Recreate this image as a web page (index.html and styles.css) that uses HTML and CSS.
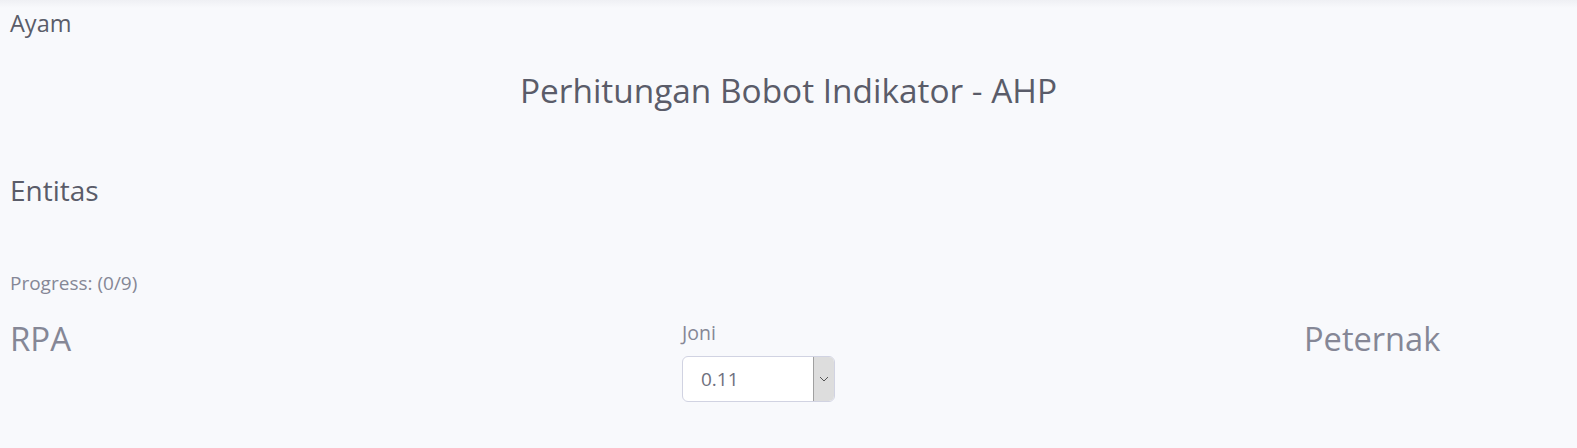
FILE: index.html
```html
<!DOCTYPE html>
<html>
<head>
<meta charset="utf-8">
<link rel="stylesheet" href="styles.css">
</head>
<body>
<div class="topshade"></div>
<div class="page">
  <div class="brand">Ayam</div>
  <h1 class="title">Perhitungan Bobot Indikator - AHP</h1>
  <h2 class="section">Entitas</h2>
  <div class="progress">Progress: (0/9)</div>
  <div class="compare">
    <div class="side">RPA</div>
    <div class="mid">
      <div class="label">Joni</div>
      <div class="select">
        <span class="value">0.11</span>
        <span class="arrow">
          <svg width="10" height="6" viewBox="0 0 10 6"><path d="M1 1 L5 5 L9 1" fill="none" stroke="#555" stroke-width="1"/></svg>
        </span>
      </div>
    </div>
    <div class="side">Peternak</div>
  </div>
</div>
</body>
</html>
```
FILE: styles.css
```css
html, body {
  margin: 0;
  padding: 0;
  background: #f8f9fc;
  height: 100%;
}
body {
  font-family: "Open Sans", "Noto Sans", sans-serif;
  color: #858796;
  position: relative;
}
.topshade {
  position: absolute;
  left: 0;
  right: 0;
  top: 0;
  height: 8px;
  background: linear-gradient(#eff0f4, #f8f9fc);
}
.page {
  position: relative;
  padding: 11px 10px 0 10px;
}
.brand {
  font-size: 23.5px;
  line-height: 24px;
  color: #5a5c69;
}
.title {
  margin: 35px 0 0 0;
  font-size: 33.4px;
  font-weight: 400;
  line-height: 40px;
  color: #5a5c69;
  text-align: center;
}
.section {
  margin: 63px 0 0 0;
  font-size: 28px;
  font-weight: 400;
  line-height: 34px;
  color: #5a5c69;
}
.progress {
  margin-top: 64px;
  font-size: 19px;
  line-height: 24px;
  color: #858796;
}
.compare {
  margin-top: 24px;
  display: grid;
  grid-template-columns: 672px 622px 1fr;
}
.side {
  font-size: 33px;
  line-height: 40px;
  color: #858796;
}
.side:last-child {
  font-size: 32.6px;
}
.mid {
  padding-top: 2px;
}
.label {
  font-size: 19.5px;
  line-height: 24px;
}
.select {
  margin-top: 11px;
  width: 153px;
  height: 46px;
  box-sizing: border-box;
  border: 1px solid #d1d3e2;
  border-radius: 6px;
  background: #fff;
  display: flex;
  align-items: stretch;
  overflow: hidden;
}
.value {
  flex: 1;
  padding-left: 18px;
  font-size: 19px;
  line-height: 44px;
  color: #6e707e;
}
.arrow {
  width: 20px;
  background: #dddddd;
  border-left: 1px solid #a0a0a0;
  display: flex;
  align-items: center;
  justify-content: center;
}
```
